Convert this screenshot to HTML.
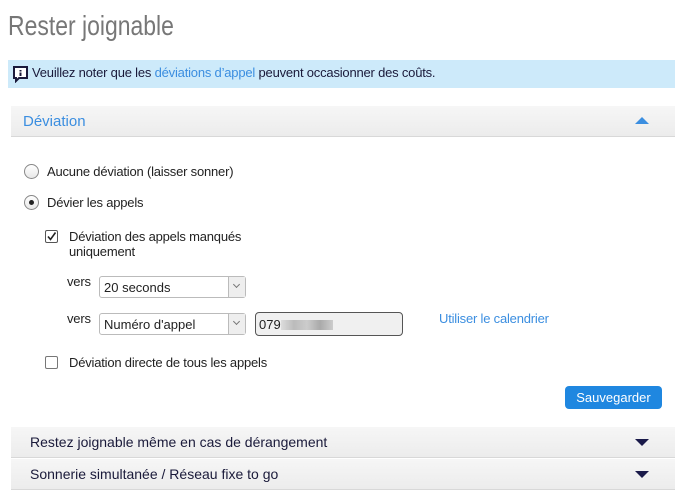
<!DOCTYPE html>
<html><head><meta charset="utf-8"><style>
*{margin:0;padding:0;box-sizing:border-box}
body{width:680px;height:499px;background:#fff;font-family:"Liberation Sans",sans-serif;position:relative;overflow:hidden;color:#222}
.a{position:absolute;white-space:nowrap}
.t13{font-size:13px;letter-spacing:-0.2px}
.radio{position:absolute;width:15px;height:15px;border:1px solid #888;border-radius:50%;background:linear-gradient(#fff,#e8e8e8)}
.cb{position:absolute;width:13px;height:13px;border:1px solid #555;border-radius:2px;background:#fff}
.sel{position:absolute;height:22px;border:1px solid #bbb;border-radius:3px;background:#fff;font-size:13px;padding:3px 0 0 4px}
.sel i{position:absolute;right:0;top:0;width:17px;height:20px;border-left:1px solid #bbb;background:#eee}
.sel i:after{content:"";position:absolute;left:5px;top:5px;width:4px;height:4px;border-right:1px solid #777;border-bottom:1px solid #777;transform:rotate(45deg)}
.acc{position:absolute;left:11px;width:664px;height:31px;background:linear-gradient(#f6f6f6,#ececec);border-bottom:1px solid #d8d8d8}
.tri{position:absolute;right:26px;top:12px;width:0;height:0;border-left:7px solid transparent;border-right:7px solid transparent}
</style></head><body>
<div class="a" style="left:8px;top:10px;font-size:28px;color:#777;transform:scaleX(0.82);transform-origin:0 0">Rester joignable</div>
<div class="a" style="left:8px;top:60px;width:667px;height:28px;background:#cdeafa"></div>
<svg class="a" style="left:13px;top:66px" width="15" height="17" viewBox="0 0 15 17"><path d="M1 1H14V12H6L3 15V12H1Z" fill="#fff" stroke="#1a1a3c" stroke-width="2"/><rect x="6.5" y="4" width="2" height="1.5" fill="#1a1a3c"/><rect x="6.5" y="6.5" width="2" height="3.5" fill="#1a1a3c"/></svg>
<div class="a t13" style="left:32px;top:65px;color:#1a1a3a">Veuillez noter que les <span style="color:#3b8ee0">déviations d’appel</span> peuvent occasionner des coûts.</div>
<div class="acc" style="top:106px"><div class="a" style="left:12px;top:7px;font-size:15px;color:#3b8ee0">Déviation</div><div class="tri" style="top:11px;border-bottom:7px solid #3b8ee0"></div></div>
<div class="radio" style="left:24px;top:164px"></div>
<div class="a t13" style="left:47px;top:164px">Aucune déviation (laisser sonner)</div>
<div class="radio" style="left:24px;top:195px"><div style="position:absolute;left:4px;top:4px;width:5px;height:5px;border-radius:50%;background:#222"></div></div>
<div class="a t13" style="left:47px;top:195px">Dévier les appels</div>
<div class="cb" style="left:45px;top:230px"><svg width="11" height="11" style="position:absolute;left:0;top:0"><path d="M2 5.5L4.5 8.5L9.5 1.5" stroke="#222" stroke-width="1.6" fill="none"/></svg></div>
<div class="a t13" style="left:69px;top:229px;line-height:15px">Déviation des appels manqués<br>uniquement</div>
<div class="a t13" style="left:67px;top:274px">vers</div>
<div class="sel" style="left:99px;top:276px;width:147px">20 seconds<i></i></div>
<div class="a t13" style="left:67px;top:311px">vers</div>
<div class="sel" style="left:99px;top:313px;width:147px">Numéro d'appel<i></i></div>
<div class="a" style="left:255px;top:312px;width:148px;height:24px;border:1px solid #555;border-radius:4px;background:#f0f0f0;font-size:13px;padding:4px 0 0 3px">079<span style="display:inline-block;width:52px;height:10px;background:linear-gradient(90deg,#ddd,#bbb,#ccc,#aaa,#ccc);vertical-align:-1px"></span></div>
<div class="a t13" style="left:439px;top:311px;color:#3b8ee0">Utiliser le calendrier</div>
<div class="cb" style="left:45px;top:356px;border-color:#777"></div>
<div class="a t13" style="left:69px;top:355px">Déviation directe de tous les appels</div>
<div class="a" style="left:565px;top:386px;width:97px;height:23px;background:#1f87e0;border-radius:4px;color:#fff;font-size:13px;text-align:center;line-height:23px">Sauvegarder</div>
<div class="acc" style="top:427px"><div class="a" style="left:19px;top:7px;font-size:14px;color:#1a1a3a">Restez joignable même en cas de dérangement</div><div class="tri" style="border-top:7px solid #1a1a4a"></div></div>
<div class="acc" style="top:459px"><div class="a" style="left:19px;top:7px;font-size:14px;color:#1a1a3a">Sonnerie simultanée / Réseau fixe to go</div><div class="tri" style="border-top:7px solid #1a1a4a"></div></div>
</body></html>
